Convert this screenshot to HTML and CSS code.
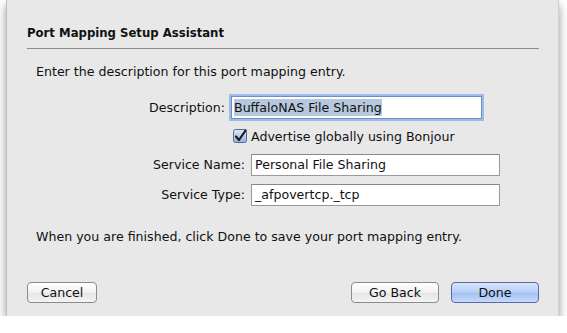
FILE: index.html
```html
<!DOCTYPE html>
<html lang="en">
<head>
    <meta charset="UTF-8">
    <title>Port Mapping Setup Assistant</title>
    <link rel="stylesheet" href="styles.css">
</head>
<body>
    <div class="sheet">
        <h1 class="sheet-title">Port Mapping Setup Assistant</h1>
        <div class="rule"></div>

        <p class="intro">Enter the description for this port mapping entry.</p>

        <div class="form">
            <div class="row row-desc">
                <label class="field-label">Description:</label>
                <div class="field field-focus"><span class="selected">BuffaloNAS File Sharing</span></div>
            </div>
            <div class="row row-check">
                <span class="checkbox">
                    <svg width="15" height="15" viewBox="0 0 15 15">
                        <defs>
                            <linearGradient id="cb" x1="0" y1="0" x2="0" y2="1">
                                <stop offset="0" stop-color="#dfe9f8"/>
                                <stop offset="1" stop-color="#8fb1e6"/>
                            </linearGradient>
                        </defs>
                        <rect x="0.5" y="0.5" width="13" height="13" rx="2" fill="url(#cb)" stroke="#5a6a8e"/>
                        <path d="M3 7.5 L6 11 L12.5 1.5" fill="none" stroke="#1a1a1a" stroke-width="2.2" stroke-linecap="round" stroke-linejoin="round"/>
                    </svg>
                </span>
                <span class="check-label">Advertise globally using Bonjour</span>
            </div>
            <div class="row">
                <label class="field-label">Service Name:</label>
                <div class="field">Personal File Sharing</div>
            </div>
            <div class="row">
                <label class="field-label">Service Type:</label>
                <div class="field">_afpovertcp._tcp</div>
            </div>
        </div>

        <p class="outro">When you are finished, click Done to save your port mapping entry.</p>

        <div class="buttons">
            <button class="btn btn-cancel">Cancel</button>
            <div class="spacer"></div>
            <button class="btn">Go Back</button>
            <button class="btn btn-default">Done</button>
        </div>
    </div>
</body>
</html>
```

FILE: styles.css
```css
body {
    margin: 0;
    background: #ffffff;
    font-family: "DejaVu Sans", "Lucida Grande", sans-serif;
    font-size: 12.6px;
    color: #111;
}

.sheet {
    box-sizing: border-box;
    margin-left: 6px;
    width: 553px;
    height: 316px;
    background: #e8e8e8;
    border-left: 1px solid #bdbdbd;
    border-right: 1px solid #d0d0d0;
    box-shadow: 0 5px 9px rgba(0,0,0,0.4);
    padding: 25px 19px 0 20px;
}

.sheet-title {
    margin: 0;
    font-size: 11.7px;
    font-weight: bold;
    line-height: 16px;
}

.rule {
    margin-top: 7px;
    height: 1px;
    background: #8a8a8a;
}

.intro,
.outro {
    margin: 0;
    padding-left: 9px;
    line-height: 16px;
}

.intro {
    margin-top: 15px;
}

.form {
    margin-top: 16px;
}

.row {
    display: flex;
    align-items: center;
    height: 23px;
    margin-top: 7px;
}

.row-desc {
    margin-top: 0;
}

.field-label {
    width: 218px;
    padding-right: 6px;
    text-align: right;
}

.row-desc .field-label {
    width: 198px;
}

.field {
    box-sizing: border-box;
    width: 249px;
    height: 22px;
    background: #fff;
    border: 1px solid #9a9a9a;
    border-top-color: #888;
    padding: 0 3px;
    line-height: 20px;
    white-space: nowrap;
}

.field-focus {
    width: 251px;
    height: 23px;
    border: 1px solid #6d8fc9;
    box-shadow: 0 0 0 2px #9ebce8;
    padding: 0 2px;
    line-height: 21px;
}

.selected {
    background: #b7c8de;
    padding: 1px 0;
}

.row-check {
    padding-left: 206px;
    height: 16px;
    margin: 9px 0;
}

.checkbox {
    display: flex;
    width: 15px;
    height: 15px;
    margin-right: 3px;
}

.outro {
    margin-top: 23px;
}

.buttons {
    display: flex;
    align-items: center;
    margin-top: 37px;
}

.spacer {
    flex: 1;
}

.btn {
    box-sizing: border-box;
    height: 21px;
    width: 88px;
    font-family: "DejaVu Sans", "Lucida Grande", sans-serif;
    font-size: 12.6px;
    color: #111;
    border: 1px solid #8c8c8c;
    border-radius: 4px;
    background: linear-gradient(#ffffff, #f2f2f2 50%, #e4e4e4 51%, #f4f4f4);
    padding: 0;
}

.btn-cancel {
    width: 70px;
}

.btn + .btn {
    margin-left: 12px;
}

.btn-default {
    border-color: #5d66a6;
    background: linear-gradient(#d9e6fb, #b4cdf6 50%, #9ebef4 51%, #c6dbfb);
}
```
